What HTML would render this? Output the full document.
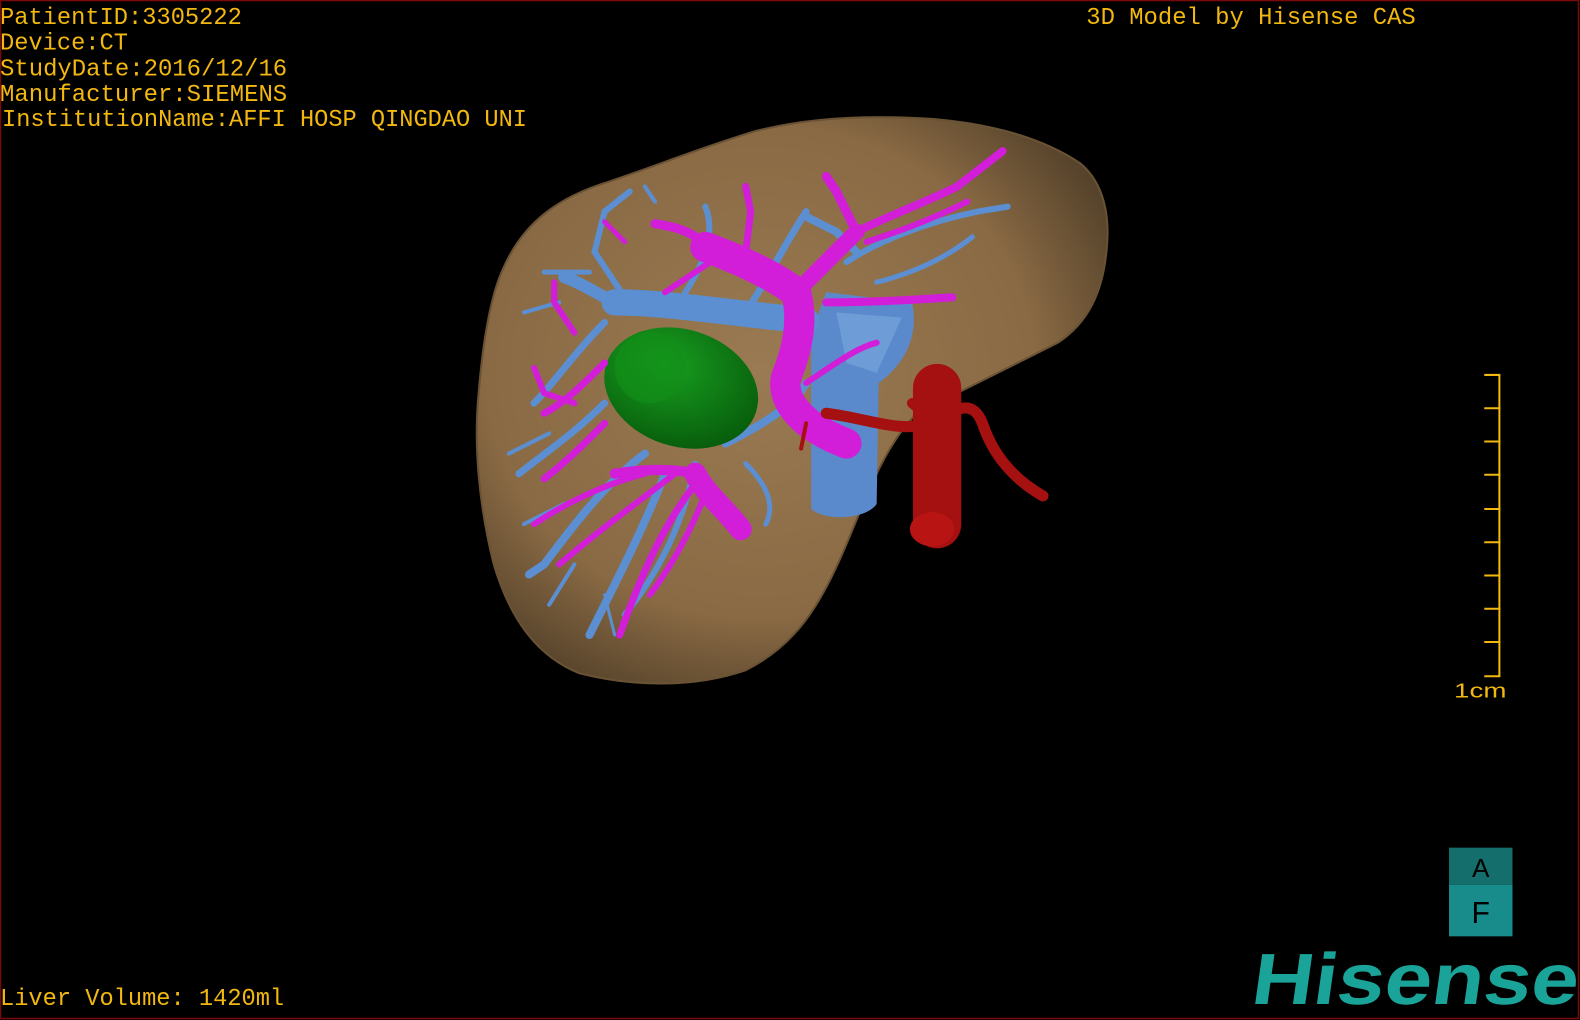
<!DOCTYPE html>
<html><head><meta charset="utf-8"><style>
html,body{margin:0;padding:0;background:#000;width:1580px;height:1020px;overflow:hidden}
svg{display:block}
</style></head><body>
<svg width="1580" height="1020" viewBox="0 0 1568 1012" preserveAspectRatio="none" xmlns="http://www.w3.org/2000/svg">
<rect x="0" y="0" width="1568" height="1012" fill="#000"/>
<rect x="0.5" y="0.5" width="1566" height="1010" fill="none" stroke="#7a0a0a" stroke-width="1.5"/>
<defs>
<radialGradient id="lv" cx="0.45" cy="0.45" r="0.62">
<stop offset="0" stop-color="#9a7a52"/><stop offset="0.7" stop-color="#8a6a44"/><stop offset="1" stop-color="#56432b"/>
</radialGradient>
<radialGradient id="gr" cx="0.35" cy="0.35" r="0.7">
<stop offset="0" stop-color="#18a020"/><stop offset="1" stop-color="#085e0c"/>
</radialGradient>
</defs>
<!-- liver -->
<path d="M500,265 C520,220 555,195 605,180 C655,163 700,145 750,130 C805,116 865,114 925,118 C985,123 1035,137 1072,162 C1096,182 1102,215 1098,250 C1094,290 1080,320 1050,340 C1010,360 960,385 910,410 C880,440 865,480 840,540 C815,600 790,640 740,665 C690,682 630,682 575,668 C530,650 505,610 490,560 C475,500 470,440 475,390 C480,330 488,290 500,265 Z" fill="url(#lv)" stroke="#6a5234" stroke-width="2"/>
<!-- IVC -->
<path d="M820,290 L905,300 C912,330 900,360 872,380 L870,500 C860,515 820,518 805,505 L805,330 Z" fill="#5a8acb"/>
<path d="M830,310 L895,315 L870,370 L840,360 Z" fill="#7aa8e0" opacity="0.6"/>
<!-- blue vessels -->
<g stroke="#5b8fd2" fill="none" stroke-linecap="round">
<path d="M610,300 C660,300 720,310 800,318" stroke-width="26"/>
<path d="M610,300 C590,290 575,280 560,275" stroke-width="12"/>
<path d="M620,295 L590,250 L600,210 L625,190" stroke-width="6"/>
<path d="M585,270 L540,270" stroke-width="5"/>
<path d="M600,320 C570,350 550,380 530,400" stroke-width="7"/>
<path d="M600,400 C570,430 540,450 515,470" stroke-width="7"/>
<path d="M640,450 C600,480 570,520 540,560 L525,570" stroke-width="8"/>
<path d="M660,470 C640,520 620,560 600,600 L585,630" stroke-width="8"/>
<path d="M690,460 C680,510 660,560 620,610" stroke-width="6"/>
<path d="M720,440 C760,420 790,400 800,380" stroke-width="8"/>
<path d="M740,460 C760,480 770,500 760,520" stroke-width="5"/>
<path d="M680,290 C700,260 710,230 700,205" stroke-width="6"/>
<path d="M740,310 C760,280 780,240 800,210" stroke-width="7"/>
<path d="M800,215 L830,230 L850,250" stroke-width="8"/>
<path d="M840,260 C870,240 920,220 970,210 L1000,205" stroke-width="6"/>
<path d="M870,280 C910,270 940,255 965,235" stroke-width="5"/>
<path d="M555,300 L520,310" stroke-width="4"/>
<path d="M545,430 L505,450" stroke-width="4"/>
<path d="M560,500 L520,520" stroke-width="4"/>
<path d="M570,560 L545,600" stroke-width="4"/>
<path d="M600,590 L610,630" stroke-width="3"/>
<path d="M650,200 L640,185" stroke-width="4"/>
</g>
<!-- green -->
<ellipse cx="676" cy="385" rx="78" ry="58" transform="rotate(18 676 385)" fill="url(#gr)"/>
<ellipse cx="645" cy="365" rx="35" ry="35" fill="#138e18" opacity="0.7"/>
<!-- magenta -->
<g stroke="#d21ed8" fill="none" stroke-linecap="round">
<path d="M700,245 C740,260 770,275 790,290 C798,320 790,350 780,375 C775,400 800,425 840,440" stroke-width="30"/>
<path d="M790,290 C810,270 830,250 850,230" stroke-width="16"/>
<path d="M850,230 L830,190 L820,175" stroke-width="9"/>
<path d="M850,230 C880,215 920,200 950,185 L995,150" stroke-width="8"/>
<path d="M860,240 C890,230 920,220 960,200" stroke-width="6"/>
<path d="M820,300 C860,300 900,298 945,295" stroke-width="8"/>
<path d="M700,245 C690,230 670,225 650,222" stroke-width="9"/>
<path d="M740,250 L745,210 L740,185" stroke-width="7"/>
<path d="M720,250 L690,270 L660,290" stroke-width="6"/>
<path d="M690,470 C700,490 720,505 735,525" stroke-width="22"/>
<path d="M690,470 C670,465 640,465 610,470" stroke-width="10"/>
<path d="M690,480 C660,520 640,560 615,630" stroke-width="7"/>
<path d="M700,490 C680,540 660,570 645,590" stroke-width="6"/>
<path d="M670,470 C630,500 590,530 555,560" stroke-width="6"/>
<path d="M640,470 C600,480 560,500 530,520" stroke-width="6"/>
<path d="M600,360 C580,380 560,400 540,410" stroke-width="7"/>
<path d="M600,420 C580,440 560,460 540,475" stroke-width="7"/>
<path d="M570,330 L550,300 L550,280" stroke-width="6"/>
<path d="M570,400 L540,390 L530,365" stroke-width="6"/>
<path d="M620,240 L600,220" stroke-width="5"/>
<path d="M800,380 C830,360 850,345 870,340" stroke-width="6"/>
</g>
<!-- red -->
<g stroke="#a51010" fill="none" stroke-linecap="round">
<path d="M930,385 L930,520" stroke-width="48"/>
<path d="M820,410 C860,415 895,430 920,420 C950,405 965,395 975,420 C985,450 1005,475 1035,492" stroke-width="11"/>
<path d="M905,400 C930,420 940,450 930,470" stroke-width="10"/>
<path d="M800,420 L795,445" stroke-width="4"/>
</g>
<ellipse cx="925" cy="525" rx="22" ry="17" fill="#b81414"/>
<!-- scale -->
<g stroke="#f2b810" stroke-width="2" fill="none">
<path d="M1488,372 L1488,671"/>
<path d="M1473,372H1489M1473,405H1489M1473,438H1489M1473,471H1489M1473,505H1489M1473,538H1489M1473,571H1489M1473,604H1489M1473,637H1489M1473,671H1489"/>
</g>
<text x="1443" y="692" font-family="Liberation Sans, sans-serif" font-size="20" fill="#f2b810" textLength="52" lengthAdjust="spacingAndGlyphs">1cm</text>
<!-- AF box -->
<rect x="1438" y="841" width="63" height="37" fill="#136e6c"/>
<rect x="1438" y="878" width="63" height="51" fill="#178c8a"/>
<text x="1469.5" y="870" text-anchor="middle" font-family="Liberation Sans, sans-serif" font-size="26" fill="#000">A</text>
<text x="1469.5" y="916" text-anchor="middle" font-family="Liberation Sans, sans-serif" font-size="30" fill="#000">F</text>
<text x="1240" y="996" font-family="Liberation Sans, sans-serif" font-weight="bold" font-size="72" fill="#1aa398" textLength="324" lengthAdjust="spacingAndGlyphs" transform="skewX(-8) translate(140 0)">Hisense</text>
<!-- texts -->
<g font-family="Liberation Mono, monospace" font-size="24" fill="#f2b810">
<text x="0" y="24" textLength="240" lengthAdjust="spacingAndGlyphs">PatientID:3305222</text>
<text x="0" y="49" textLength="127" lengthAdjust="spacingAndGlyphs">Device:CT</text>
<text x="0" y="75" textLength="285" lengthAdjust="spacingAndGlyphs">StudyDate:2016/12/16</text>
<text x="0" y="100" textLength="285" lengthAdjust="spacingAndGlyphs">Manufacturer:SIEMENS</text>
<text x="2" y="125" textLength="521" lengthAdjust="spacingAndGlyphs">InstitutionName:AFFI HOSP QINGDAO UNI</text>
<text x="1078" y="24" textLength="327" lengthAdjust="spacingAndGlyphs">3D Model by Hisense CAS</text>
<text x="0" y="997" textLength="282" lengthAdjust="spacingAndGlyphs">Liver Volume: 1420ml</text>
</g>
</svg>
</body></html>
